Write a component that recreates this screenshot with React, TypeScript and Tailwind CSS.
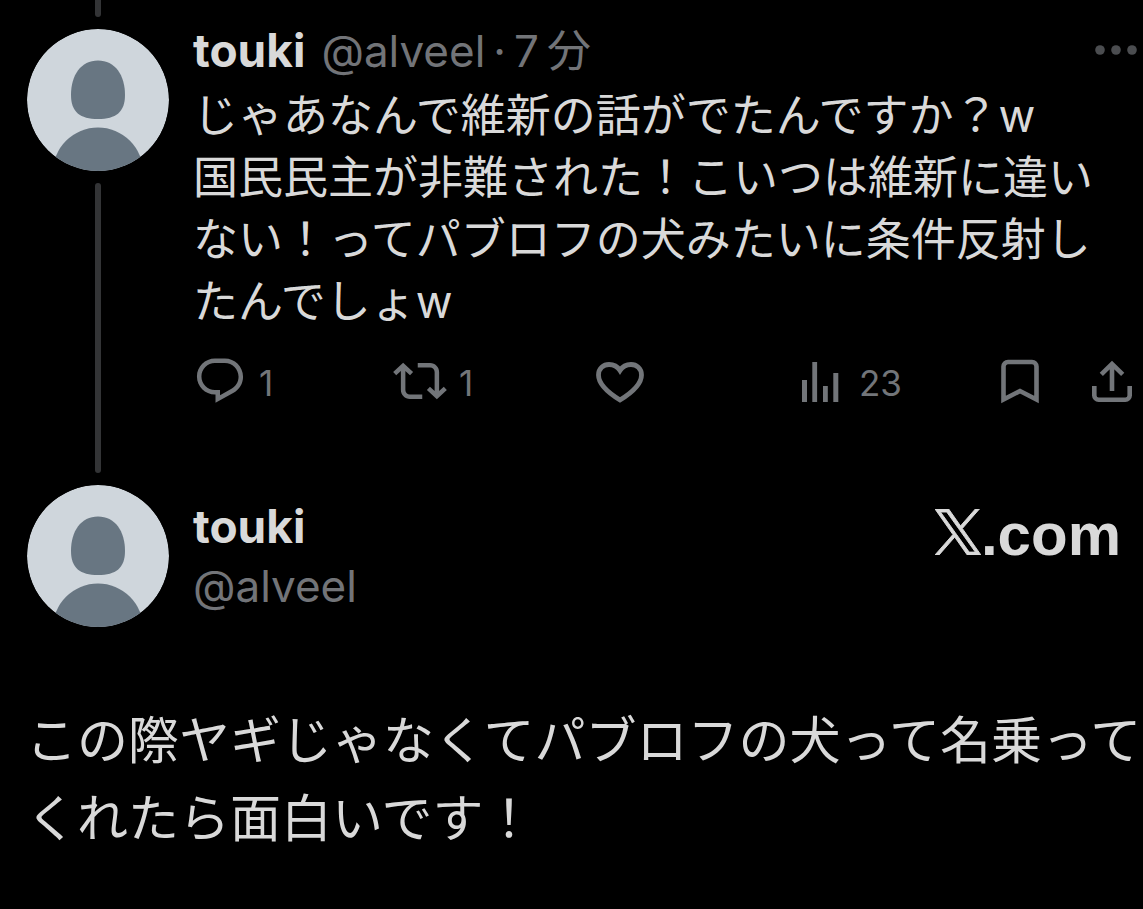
import React from 'react';

const Avatar: React.FC = () => (
  <svg viewBox="0 0 142 142" className="block h-[142px] w-[142px] shrink-0 rounded-full" aria-hidden="true">
    <circle cx="71" cy="71" r="71" fill="#cfd6dc" />
    <path
      d="M71 31.5C88 31.5 98 46 98 66C98 83 89 90 71 90C53 90 44 83 44 66C44 46 54 31.5 71 31.5Z"
      fill="#687682"
    />
    <circle cx="71" cy="143.7" r="45.2" fill="#687682" />
  </svg>
);

const ReplyIcon = () => (
  <svg viewBox="0 0 24 24" className="h-[54px] w-[54px] shrink-0" fill="currentColor" aria-hidden="true">
    <path d="M1.751 10c0-4.42 3.584-8 8.005-8h4.366c4.49 0 8.129 3.64 8.129 8.13 0 2.96-1.607 5.68-4.196 7.11l-8.054 4.46v-3.69h-.067c-4.49.1-8.183-3.51-8.183-8.01zm8.005-6c-3.317 0-6.005 2.69-6.005 6 0 3.37 2.77 6.08 6.138 6.01l.351-.01h1.761v2.3l5.087-2.81c1.951-1.08 3.163-3.13 3.163-5.36 0-3.39-2.744-6.13-6.129-6.13H9.756z" />
  </svg>
);

const RepostIcon = () => (
  <svg viewBox="0 0 24 24" className="h-[54px] w-[54px] shrink-0" fill="currentColor" aria-hidden="true">
    <path d="M4.5 3.88l4.432 4.14-1.364 1.46L5.5 7.55V16c0 1.1.896 2 2 2H13v2H7.5c-2.209 0-4-1.79-4-4V7.55L1.432 9.48.068 8.02 4.5 3.88zM16.5 6H11V4h5.5c2.209 0 4 1.79 4 4v8.45l2.068-1.93 1.364 1.46-4.432 4.14-4.432-4.14 1.364-1.46 2.068 1.93V8c0-1.1-.896-2-2-2z" />
  </svg>
);

const LikeIcon = () => (
  <svg viewBox="0 0 54 54" className="h-[54px] w-[54px] shrink-0" fill="none" stroke="currentColor" strokeWidth="4.8" aria-hidden="true">
    <path d="M27 46C14 38 5.5 29 5.5 21C5.5 14.5 10.5 10.5 16 10.5C20.5 10.5 24.5 12.5 27 16.5C29.5 12.5 33.5 10.5 38 10.5C43.5 10.5 48.5 14.5 48.5 21C48.5 29 40 38 27 46Z" />
  </svg>
);

const ViewsIcon = () => (
  <svg viewBox="0 0 54 54" className="h-[54px] w-[54px] shrink-0" fill="currentColor" aria-hidden="true">
    <rect x="9" y="26" width="5" height="22" />
    <rect x="19.3" y="8" width="4.8" height="40" />
    <rect x="30" y="32" width="4.8" height="16" />
    <rect x="40.3" y="19" width="5" height="29" />
  </svg>
);

const BookmarkIcon = () => (
  <svg viewBox="0 0 54 54" className="h-[54px] w-[54px] shrink-0" fill="none" stroke="currentColor" strokeWidth="4.6" aria-hidden="true">
    <path d="M10.5 45.5V12.5A4.5 4.5 0 0 1 15 8H39A4.5 4.5 0 0 1 43.5 12.5V45.5L27 37Z" />
  </svg>
);

const ShareIcon = () => (
  <svg viewBox="0 0 54 54" className="h-[54px] w-[54px] shrink-0" fill="none" stroke="currentColor" strokeWidth="4.6" aria-hidden="true">
    <path d="M9.3 32V41.5A4.3 4.3 0 0 0 13.6 45.7H40.4A4.3 4.3 0 0 0 44.7 41.5V32" />
    <path d="M27 37V10M16.3 20.3L27 9.9L37.7 20.3" />
  </svg>
);

const actions = [
  { label: '返信', count: '1', Icon: ReplyIcon },
  { label: 'リポスト', count: '1', Icon: RepostIcon },
  { label: 'いいね', count: '', Icon: LikeIcon },
  { label: '表示', count: '23', Icon: ViewsIcon },
];

const ReplyPost: React.FC = () => (
  <article className="flex gap-6 pl-[27px] pr-1">
    <div className="flex shrink-0 flex-col items-center gap-3 pb-3">
      <div className="h-[17px] w-1.5 rounded-b-full bg-[#333436]" />
      <Avatar />
      <div className="w-1.5 flex-1 rounded-full bg-[#333436]" />
    </div>

    <div className="min-w-0 flex-1 pb-[77px] pt-5">
      <header className="flex h-[60px] items-center justify-between">
        <div className="flex items-baseline whitespace-nowrap text-[44px] leading-[60px] text-[#727478]">
          <a href="#touki" className="text-[46px] font-bold text-[#d9d9d9]">touki</a>
          <a href="#touki" className="ml-4">@alveel</a>
          <span className="mx-2">·</span>
          <time className="flex gap-2">
            <span>7</span>
            <span>分</span>
          </time>
        </div>
        <button type="button" aria-label="もっと見る" className="text-[#4b4d50]">
          <svg viewBox="0 0 44 12" className="h-3 w-11" fill="currentColor" aria-hidden="true">
            <circle cx="5" cy="6" r="4.8" />
            <circle cx="21" cy="6" r="4.8" />
            <circle cx="37" cy="6" r="4.8" />
          </svg>
        </button>
      </header>

      <p className="mt-[5px] text-[45px] leading-[62px]">
        じゃあなんで維新の話がでたんですか？w
        <br />
        国民民主が非難された！こいつは維新に違い
        <br />
        ない！ってパブロフの犬みたいに条件反射し
        <br />
        たんでしょw
      </p>

      <div className="mt-[21px] flex items-center text-[#727579]">
        <div className="grid flex-1 grid-cols-4">
          {actions.map(({ label, count, Icon }) => (
            <button key={label} type="button" aria-label={label} className="flex items-center gap-3">
              <Icon />
              {count && <span className="pt-1 text-[35px] leading-[50px]">{count}</span>}
            </button>
          ))}
        </div>
        <div className="flex gap-[38px]">
          <button type="button" aria-label="ブックマーク"><BookmarkIcon /></button>
          <button type="button" aria-label="共有"><ShareIcon /></button>
        </div>
      </div>
    </div>
  </article>
);

const MainPost: React.FC = () => (
  <article>
    <header className="flex items-center gap-6 pl-[27px] pr-[22px]">
      <Avatar />
      <div className="flex flex-1 flex-col text-[44px] leading-[60px]">
        <a href="#touki" className="text-[46px] font-bold leading-[60px]">touki</a>
        <a href="#touki" className="text-[#727478]">@alveel</a>
      </div>
      <div className="flex items-baseline self-start pt-5">
        <svg
          viewBox="0 0 24 24"
          className="h-[46px] w-[46px]"
          fill="currentColor"
          stroke="currentColor"
          strokeWidth="0.5"
          aria-hidden="true"
        >
          <path d="M14.258 10.152L23.176 0h-2.113l-7.747 8.813L7.133 0H0l9.352 13.328L0 23.973h2.113l8.176-9.309 6.531 9.309h7.133l-9.695-13.821ZM11.363 13.445l-.949-1.328L2.875 1.56h3.246l6.086 8.523.945 1.328 7.91 11.078h-3.246l-6.454-9.044Z" />
        </svg>
        <span className="font-['Liberation_Sans'] text-[60px] font-bold leading-[60px]">.com</span>
      </div>
    </header>

    <p className="whitespace-nowrap pb-12 pl-[26px] pt-[75px] text-[51px] leading-[78px]">
      この際ヤギじゃなくてパブロフの犬って名乗って
      <br />
      くれたら面白いです！
    </p>
  </article>
);

export default function App() {
  return (
    <main
      lang="ja"
      className="min-h-screen overflow-hidden bg-black font-['Inter','Noto_Sans_CJK_JP',sans-serif] text-[#d9d9d9]"
    >
      <ReplyPost />
      <MainPost />
    </main>
  );
}
